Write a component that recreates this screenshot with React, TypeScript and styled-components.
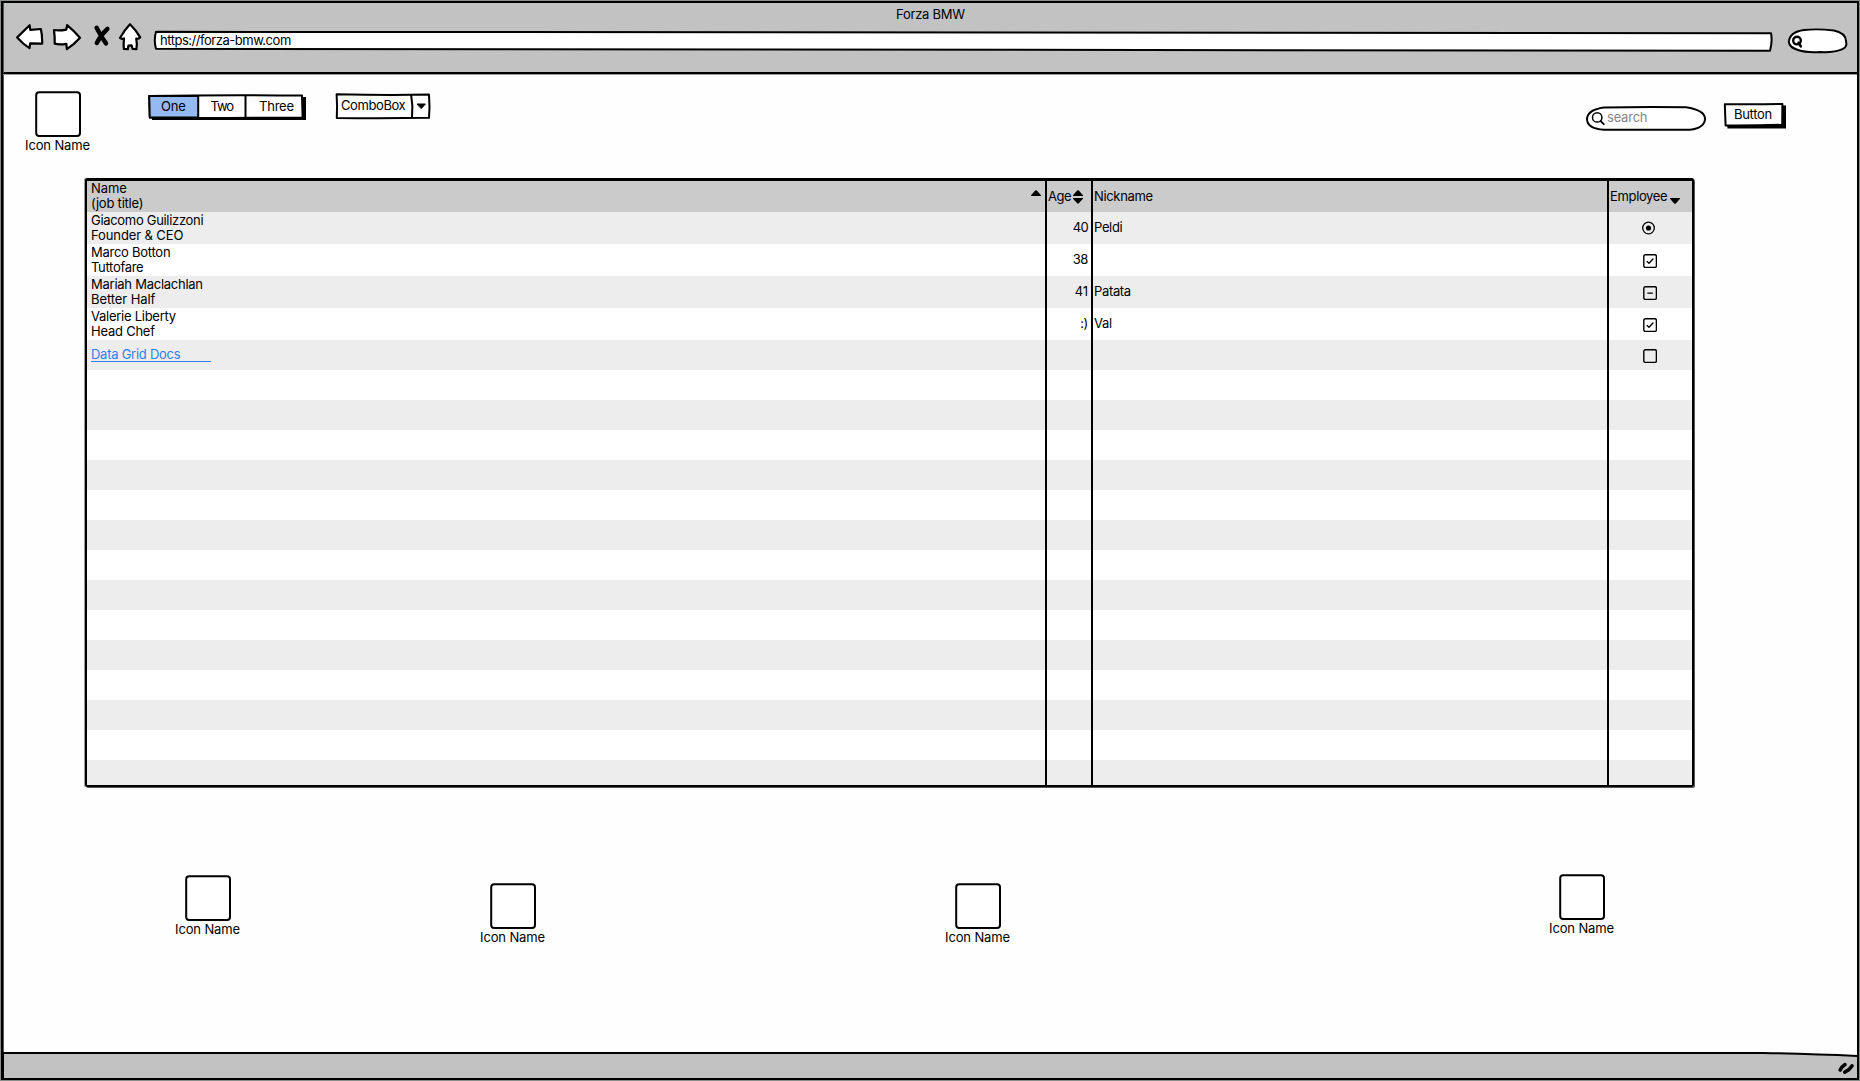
import React, { useLayoutEffect, useRef, useState } from "react";
import styled, { createGlobalStyle } from "styled-components";

const GlobalStyle = createGlobalStyle`
  *, *::before, *::after { box-sizing: border-box; }
  body {
    margin: 0;
    background: #fff;
    color: #000;
    font-family: Inter, "Open Sans", sans-serif;
    font-size: 13px;
    line-height: 15px;
  }
`;

/* ---------- text ---------- */

const TextSpan = styled.span<{ $color?: string }>`
  display: inline-block;
  white-space: nowrap;
  color: ${(p) => p.$color ?? "inherit"};
`;

interface LabelProps {
  children: string;
  width: number;
  color?: string;
}

/* Spreads the letters so that the text takes the given width. */
function Label({ children, width, color }: LabelProps) {
  const ref = useRef<HTMLSpanElement>(null);
  const [spacing, setSpacing] = useState(0);
  useLayoutEffect(() => {
    if (ref.current) {
      const natural = ref.current.getBoundingClientRect().width;
      setSpacing((width + 0.8 - natural) / children.length);
    }
  }, [children, width]);
  return (
    <TextSpan ref={ref} $color={color} style={{ letterSpacing: spacing }}>
      {children}
    </TextSpan>
  );
}

/* ---------- window ---------- */

const Window = styled.div`
  display: flex;
  flex-direction: column;
  width: 1858px;
  height: 1079px;
  margin: 1px;
  border: 2px solid #000;
  background: #fefefe;
  box-shadow: 0 0 0 1px #8a8e8a, inset 1px 0 0 #555;
  overflow: hidden;
`;

const Chrome = styled.header`
  display: flex;
  flex-direction: column;
  height: 71px;
  border-bottom: 2px solid #000;
  border-left: 1px solid #555;
  background: #c2c2c2;
  box-shadow: 0 1px 0 #999;
  flex: none;
`;

const TitleBar = styled.div`
  display: flex;
  justify-content: center;
  height: 19px;
  padding-top: 4px;
`;

const NavBar = styled.div`
  display: flex;
  align-items: flex-start;
  padding-left: 12px;
`;

const NavIcons = styled.svg`
  display: block;
  width: 126px;
  height: 30px;
  flex: none;
`;

const Outlined = styled.div<{ $w: number; $h: number }>`
  position: relative;
  display: flex;
  flex: none;
  width: ${(p) => p.$w}px;
  height: ${(p) => p.$h}px;
`;

const Sketch = styled.svg`
  position: absolute;
  inset: 0;
  width: 100%;
  height: 100%;
  overflow: visible;
  fill: #fff;
  stroke: #000;
  stroke-width: 2;
  stroke-linejoin: round;
  stroke-linecap: round;
`;

const Over = styled.div<{ $x: number; $y: number }>`
  position: relative;
  display: flex;
  padding: ${(p) => p.$y}px 0 0 ${(p) => p.$x}px;
`;

const AddressBar = styled(Outlined)`
  margin: 8px 15px 0 12px;
`;

const ChromeSearch = styled(Outlined)`
  margin-top: 6px;
`;

/* ---------- page ---------- */

const Page = styled.main`
  display: flex;
  flex-direction: column;
  flex: 1;
`;

const Toolbar = styled.div`
  display: flex;
  align-items: flex-start;
  height: 104px;
  padding: 17px 0 0 21px;
`;

const Tile = styled.figure<{ $left?: number; $top?: number }>`
  display: flex;
  flex-direction: column;
  align-items: center;
  width: 67px;
  margin: ${(p) => p.$top ?? 0}px 1px 0 ${(p) => p.$left ?? 0}px;
  flex: none;
`;

const TileBox = styled(Outlined)`
  margin-bottom: 1px;
`;

const Tabs = styled(Outlined)`
  margin: 3px 0 0 56px;
`;

const Tab = styled.div<{ $w: number; $pad: number }>`
  position: relative;
  width: ${(p) => p.$w}px;
  padding: 5px 0 0 ${(p) => p.$pad}px;
`;

const Combo = styled(Outlined)`
  margin: 2px 0 0 30px;
`;

const SearchField = styled(Outlined)`
  margin: 15px 18px 0 auto;
`;

const PushButton = styled(Outlined)`
  margin: 12px 71px 0 0;
`;

/* ---------- data grid ---------- */

const Grid = styled.section`
  width: 1609px;
  height: 609px;
  margin-left: 82px;
  border: 2px solid #000;
  border-top-width: 3px;
  border-radius: 2px;
  box-shadow: 1px 1px 0 #555, -1px 0 0 #999;
  overflow: hidden;
  flex: none;
`;

const Row = styled.div<{ $h: number; $bg: string }>`
  display: grid;
  grid-template-columns: 960px 46px 516px 83px;
  height: ${(p) => p.$h}px;
  background: ${(p) => p.$bg};
`;

const Cell = styled.div<{ $align?: string; $pad?: string; $last?: boolean }>`
  display: flex;
  align-items: center;
  justify-content: ${(p) => p.$align ?? "flex-start"};
  padding: ${(p) => p.$pad ?? "0"};
  border-right: ${(p) => (p.$last ? "none" : "2px solid #000")};
`;

const Lines = styled.div`
  display: flex;
  flex-direction: column;
  align-items: flex-start;
`;

const Link = styled.a`
  display: block;
  width: 120px;
  height: 15px;
  margin-bottom: 1px;
  border-bottom: 1px solid #2f80ed;
  color: #2f80ed;
`;

const Glyph = styled.svg<{ $w: number; $h: number; $m?: string }>`
  display: block;
  flex: none;
  width: ${(p) => p.$w}px;
  height: ${(p) => p.$h}px;
  margin: ${(p) => p.$m ?? "0"};
`;

type Mark = "radio" | "check" | "dash" | "empty";

function MarkIcon({ kind }: { kind: Mark }) {
  if (kind === "radio") {
    return (
      <Glyph $w={14} $h={14} $m="0 0 0 33px" viewBox="0 0 14 14" fill="none" stroke="#000">
        <circle cx="6.5" cy="7" r="5.8" strokeWidth="1.3" />
        <circle cx="6.5" cy="7" r="2.6" fill="#000" stroke="none" />
      </Glyph>
    );
  }
  return (
    <Glyph $w={14} $h={14} $m="1px 0 0 34px" viewBox="0 0 14 14" fill="none" stroke="#000" strokeWidth="1.4" strokeLinecap="round" strokeLinejoin="round">
      <rect x="0.8" y="0.8" width="12.6" height="12.6" rx="1.5" />
      {kind === "check" && <path d="M4.2 7.6 6 9.3 10 5.1" />}
      {kind === "dash" && <path d="M4.8 7.1H9.4" />}
    </Glyph>
  );
}

interface Person {
  name: [string, number];
  job: [string, number];
  age: [string, number];
  nick?: [string, number];
  mark: Mark;
}

const people: Person[] = [
  { name: ["Giacomo Guilizzoni", 111.5], job: ["Founder & CEO", 91.5], age: ["40", 14.5], nick: ["Peldi", 27.5], mark: "radio" },
  { name: ["Marco Botton", 78.5], job: ["Tuttofare", 51.5], age: ["38", 14.5], mark: "check" },
  { name: ["Mariah Maclachlan", 111], job: ["Better Half", 63.5], age: ["41", 12.5], nick: ["Patata", 36], mark: "dash" },
  { name: ["Valerie Liberty", 84], job: ["Head Chef", 63], age: [":)", 7], nick: ["Val", 17], mark: "check" },
];

const emptyRows = Array.from({ length: 14 }, (_, i) => i);

function DataGrid() {
  return (
    <Grid>
      <Row $h={31} $bg="#cbcbcb">
        <Cell $pad="0 4px 3px 4px" $align="space-between">
          <Lines>
            <Label width={35}>Name</Label>
            <Label width={51.5}>(job title)</Label>
          </Lines>
          <Glyph $w={10} $h={6} $m="0 0 6px 0" viewBox="0 0 10 6">
            <path d="M0 5.2 4.2.5Q5 0 5.8.5L10 5.2V6H0Z" />
          </Glyph>
        </Cell>
        <Cell $pad="0 0 3px 1px">
          <Label width={22.5}>Age</Label>
          <Glyph $w={10} $h={14} $m="2px 0 0 2px" viewBox="0 0 10 14">
            <path d="M0 5.2 4.2.5Q5 0 5.8.5L10 5.2V6H0ZM0 8H10V8.8L5.8 13.3Q5 14 4.2 13.3L0 8.8Z" />
          </Glyph>
        </Cell>
        <Cell $pad="0 0 3px 1px">
          <Label width={58}>Nickname</Label>
        </Cell>
        <Cell $last $pad="0 0 3px 1px">
          <Label width={56.5}>Employee</Label>
          <Glyph $w={10} $h={6} $m="9px 0 0 3px" viewBox="0 0 10 6">
            <path d="M0 0H10V.8L5.8 5.4Q5 6 4.2 5.4L0 .8Z" />
          </Glyph>
        </Cell>
      </Row>
      {people.map((p, i) => (
        <Row key={p.name[0]} $h={32} $bg={i % 2 ? "#fff" : "#ededed"}>
          <Cell $pad="0 0 1px 4px">
            <Lines>
              <Label width={p.name[1]}>{p.name[0]}</Label>
              <Label width={p.job[1]}>{p.job[0]}</Label>
            </Lines>
          </Cell>
          <Cell $align="flex-end" $pad="0 3px 1px 0">
            <Label width={p.age[1]}>{p.age[0]}</Label>
          </Cell>
          <Cell $pad="0 0 1px 1px">{p.nick && <Label width={p.nick[1]}>{p.nick[0]}</Label>}</Cell>
          <Cell $last>
            <MarkIcon kind={p.mark} />
          </Cell>
        </Row>
      ))}
      <Row $h={30} $bg="#ededed">
        <Cell $pad="0 0 0 4px">
          <Link>
            <Label width={88.5}>Data Grid Docs</Label>
          </Link>
        </Cell>
        <Cell />
        <Cell />
        <Cell $last>
          <MarkIcon kind="empty" />
        </Cell>
      </Row>
      {emptyRows.map((i) => (
        <Row key={i} $h={30} $bg={i % 2 ? "#ededed" : "#fff"}>
          <Cell />
          <Cell />
          <Cell />
          <Cell $last />
        </Row>
      ))}
    </Grid>
  );
}

const Shortcuts = styled.div`
  display: flex;
  align-items: flex-start;
  padding-top: 87px;
`;

function IconTile({ left, top }: { left?: number; top?: number }) {
  return (
    <Tile $left={left} $top={top}>
      <TileBox $w={46} $h={46}>
        <Sketch>
          <rect x="1.2" y="1.3" width="43.8" height="43.8" rx="3" />
        </Sketch>
      </TileBox>
      <Label width={64}>Icon Name</Label>
    </Tile>
  );
}

/* ---------- status bar ---------- */

const StatusBar = styled.footer`
  position: relative;
  height: 26px;
  flex: none;
`;

export default function App() {
  return (
    <>
      <GlobalStyle />
      <Window>
        <Chrome>
          <TitleBar>
            <Label width={68}>Forza BMW</Label>
          </TitleBar>
          <NavBar>
            <NavIcons viewBox="16 22 126 30" fill="#fff" stroke="#000" strokeWidth="2.2" strokeLinejoin="round" strokeLinecap="round">
              <path d="M17.2 37.4 29.6 25.2 30.3 29.8 40.9 29Q42.4 36 42.2 43.6L30.2 43.3 29.5 48.2Q23 44 17.2 37.4Z" />
              <path d="M54 30Q59.5 31 66.3 29.6L67.1 25.2Q73.5 30.5 80 37.7Q74.5 44 66.9 49.2L66.3 43.8Q59.5 45 54.7 43.6Q54.9 37 54 30Z" />
              <path d="M96.6 27.8Q100.6 36 106 43.4M107.4 28.8Q100.6 35 96.8 43" strokeWidth="4.4" fill="none" />
              <path d="M130 24.2Q136 30 140.2 37.4Q138 39.4 136.2 38.6Q137.4 44 136.4 49.2L132.6 49 131.6 45.4 128.4 45.6 127.8 49.2 123.8 49Q123.4 44 124 38.4Q121.5 39.4 120 38Q124 30.5 130 24.2Z" />
            </NavIcons>
            <AddressBar $w={1619} $h={21}>
              <Sketch>
                <path d="M2 1.8 1617 3.2Q1618.6 11 1616 20.8L2 18.8Q-.4 10 2 1.8Z" />
              </Sketch>
              <Over $x={6} $y={3}>
                <Label width={130}>https://forza-bmw.com</Label>
              </Over>
            </AddressBar>
            <ChromeSearch $w={59} $h={26}>
              <Sketch>
                <path d="M.8 14Q1.5 4 16 2Q30 .5 46 2.6Q57.5 5 58 13Q59.5 19 55 20.8Q46 24.8 32 24Q18 24.8 10 22Q1.6 19.5 .8 14Z" />
                <circle cx="9" cy="12.6" r="3.8" strokeWidth="2.4" />
                <path d="M10.6 14.6 12.8 18.4" strokeWidth="2.6" />
              </Sketch>
            </ChromeSearch>
          </NavBar>
        </Chrome>

        <Page>
          <Toolbar>
            <IconTile />
            <Tabs $w={158} $h={26}>
              <Sketch>
                <path d="M4 3H158V26H4Z" fill="#000" stroke="none" />
                <path d="M1.2 2Q80 .6 154 1.6L154.6 23.4Q80 24.4 1.8 23.4Z" />
                <path d="M1.2 2H50.2V23.6H1.8Z" fill="#95baf2" />
                <path d="M97.5 1.8V23.6" />
              </Sketch>
              <Tab $w={50} $pad={13}>
                <Label width={24}>One</Label>
              </Tab>
              <Tab $w={47} $pad={12.5}>
                <Label width={21.5}>Two</Label>
              </Tab>
              <Tab $w={58} $pad={14}>
                <Label width={34}>Three</Label>
              </Tab>
            </Tabs>
            <Combo $w={94} $h={26}>
              <Sketch>
                <path d="M.6 1.2Q50 2.6 93 1.6Q94 14 93 24.8Q50 25.6 .8 25Q1.4 12 .6 1.2Z" />
                <path d="M75.2 2.2Q77.2 13 76 24.4" />
                <path d="M81.4 11H89.4L85.4 15.4Z" fill="#000" stroke="#000" strokeWidth="1" />
              </Sketch>
              <Over $x={5} $y={5}>
                <Label width={63.5}>ComboBox</Label>
              </Over>
            </Combo>
            <SearchField $w={120} $h={25}>
              <Sketch>
                <path d="M18 1.4Q60 .6 100 1.2Q119 4 119 13Q118.6 22 104 23.8H18Q1 22.6 1 13Q1.4 3.6 18 1.4Z" />
                <circle cx="11.2" cy="11.4" r="4.7" strokeWidth="1.5" />
                <path d="M14.6 15 17.8 18.2" strokeWidth="1.8" />
              </Sketch>
              <Over $x={21} $y={4}>
                <Label width={39.5} color="#85858d">search</Label>
              </Over>
            </SearchField>
            <PushButton $w={62} $h={25}>
              <Sketch>
                <path d="M3.4 2.4H62V25.4H3.4Z" fill="#000" stroke="none" />
                <path d="M.8 1.2Q30 1.6 58.4 1L58.2 21.8Q30 22.6 1.6 22.4Z" />
              </Sketch>
              <Over $x={10} $y={4}>
                <Label width={37}>Button</Label>
              </Over>
            </PushButton>
          </Toolbar>

          <DataGrid />

          <Shortcuts>
            <IconTile left={171} top={1} />
            <IconTile left={237} top={9} />
            <IconTile left={397} top={9} />
            <IconTile left={536} />
          </Shortcuts>
        </Page>

        <StatusBar>
          <Sketch viewBox="0 0 1854 26" preserveAspectRatio="none">
            <path d="M0 1H1760Q1810 2 1855 4V27H0Z" fill="#c2c2c2" />
            <path d="M1837.2 18Q1839 14.5 1842 12.6M1841.8 20.2Q1846.5 18 1849 13.8" strokeWidth="3.6" fill="none" />
          </Sketch>
        </StatusBar>
      </Window>
    </>
  );
}
